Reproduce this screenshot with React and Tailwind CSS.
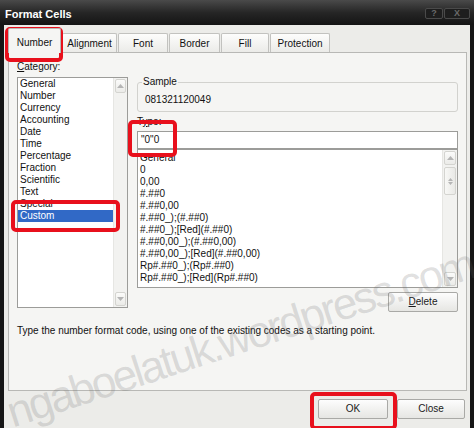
import React from "react";

const CATS = ["General","Number","Currency","Accounting","Date","Time","Percentage","Fraction","Scientific","Text","Special","Custom"];
const CODES = ["General","0","0,00","#.##0","#.##0,00","#.##0_);(#.##0)","#.##0_);[Red](#.##0)","#.##0,00_);(#.##0,00)","#.##0,00_);[Red](#.##0,00)","Rp#.##0_);(Rp#.##0)","Rp#.##0_);[Red](Rp#.##0)"];

function Up() {
  return (
    <svg width="7" height="4" viewBox="0 0 7 4"><path d="M0 4 L3.5 0 L7 4Z" fill="#b5b5b5" /></svg>
  );
}
function Down() {
  return (
    <svg width="7" height="4" viewBox="0 0 7 4"><path d="M0 0 L3.5 4 L7 0Z" fill="#b5b5b5" /></svg>
  );
}
function Grip() {
  return (
    <svg width="5" height="7" viewBox="0 0 5 7"><path d="M0 3 L2.5 0 L5 3Z M0 4 L2.5 7 L5 4Z" fill="#b5b5b5" /></svg>
  );
}

function SBtn({ children }) {
  return (
    <div className="h-[14px] mx-[1px] flex items-center justify-center bg-gradient-to-b from-[#fbfbfa] to-[#ebebe8] border border-[#d4d4d0] rounded-[2px]">
      {children}
    </div>
  );
}

function ScrollBar({ thumb, w }) {
  return (
    <div className={`${w} flex flex-col bg-[#f2f2f0] border-l border-[#e6e6e3] py-[1px]`}>
      <SBtn><Up /></SBtn>
      <div className="flex-1 flex flex-col">
        {thumb && (
          <div className="mt-[2px] h-[28px] mx-[1px] flex items-center justify-center bg-gradient-to-r from-[#f8f8f6] to-[#e9e9e6] border border-[#d4d4d0] rounded-[2px]">
            <Grip />
          </div>
        )}
      </div>
      <SBtn><Down /></SBtn>
    </div>
  );
}

function Btn({ w, children }) {
  return (
    <div className={`${w} h-[20px] flex items-center justify-center bg-gradient-to-b from-[#fdfdfd] to-[#e6e6e3] border border-[#a9a9a6] rounded-[2px] text-[#1a1a1a]`}>
      {children}
    </div>
  );
}

function RedBox({ cls }) {
  return <div className={`pointer-events-none absolute border-[4px] border-[#e8101c] rounded-[5px] ${cls}`} />;
}

export default function App() {
  const tabs = [
    ["Alignment", "w-[55px]"],
    ["Font", "w-[50px]"],
    ["Border", "w-[51px]"],
    ["Fill", "w-[48px]"],
    ["Protection", "w-[60px]"],
  ];
  return (
    <div className="relative w-[474px] h-[428px] overflow-hidden bg-[#161616] flex flex-col font-['Liberation_Sans',Arial,sans-serif] text-[10px] leading-[12px] text-[#111]">
      {/* title bar */}
      <div className="h-[25px] flex justify-between bg-gradient-to-b from-[#4a4a4a] via-[#262626] to-[#141414]">
        <div className="pl-[5px] pt-[8px] text-[11px] leading-[12px] font-bold text-white">Format Cells</div>
        <div className="flex items-start pt-[8px] pr-[4px] gap-[1px]">
          <div className="w-[18px] h-[11px] flex items-center justify-center border border-[#4a4a4a] rounded-[2px] bg-[#1e1e1e] text-[#6a6a6a] text-[9px] leading-[9px] font-bold">?</div>
          <div className="w-[26px] h-[11px] flex items-center justify-center border border-[#4a4a4a] rounded-[2px] bg-[#1e1e1e] text-[#6a6a6a] text-[9px] leading-[9px] font-bold">X</div>
        </div>
      </div>

      {/* body */}
      <div className="flex-1 mx-[4px] bg-[#ecece9] flex flex-col">
        {/* tabs */}
        <div className="h-[27px] flex items-end pl-[4px] gap-[1px]">
          <div className="relative z-10 w-[53px] h-[25px] -mb-[1px] flex items-end justify-center pb-[4px] bg-[#f5f5f3] border-t border-l border-r border-[#b8b8b5] rounded-t-[2px]">
            Number
          </div>
          {tabs.map(([t, w]) => (
            <div key={t} className={`${w} h-[19px] flex items-center justify-center pt-[1px] bg-gradient-to-b from-[#fdfdfc] to-[#ebebe8] border-t border-l border-r border-[#c2c2bf] rounded-t-[2px]`}>
              {t}
            </div>
          ))}
        </div>

        {/* panel */}
        <div className="ml-[4px] mr-[3px] h-[339px] bg-[#f5f5f3] border border-[#b8b8b5] px-[8px] pt-[8px] flex flex-col">
          <div className="flex gap-[9px]">
            {/* left column */}
            <div className="w-[111px] flex flex-col">
              <div className="h-[12px]"><span className="underline">C</span>ategory:</div>
              <div className="mt-[4px] h-[231px] bg-white border border-[#9c9c99] flex">
                <div className="flex-1 flex flex-col">
                  {CATS.map((c) => (
                    <div key={c} className={`h-[12px] pl-[2px] ${c === "Custom" ? "bg-[#3169c6] text-white" : ""}`}>{c}</div>
                  ))}
                </div>
                <ScrollBar w="w-[14px]" />
              </div>
            </div>

            {/* right column */}
            <div className="w-[321px] flex flex-col">
              <fieldset className="mt-[15px] m-0 border border-[#d2d2ce] rounded-[3px] px-[4px] pb-[5px]">
                <legend className="px-[1px] h-[12px] leading-[12px]">Sample</legend>
                <div className="mt-[6px] pl-[3px] h-[12px]">081321120049</div>
              </fieldset>
              <div className="mt-[4px] h-[12px]">T<span className="underline">y</span>pe:</div>
              <div className="mt-[3px] h-[18px] bg-white border border-[#9c9c99] flex items-center pl-[3px]">{'"0"0'}</div>
              <div className="h-[139px] bg-white border border-[#9c9c99] flex">
                <div className="flex-1 flex flex-col pt-[2px]">
                  {CODES.map((c) => (
                    <div key={c} className="h-[12px] pl-[2px] whitespace-nowrap">{c}</div>
                  ))}
                </div>
                <ScrollBar w="w-[15px]" thumb />
              </div>
              <div className="mt-[4px] self-end">
                <Btn w="w-[70px]"><span><span className="underline">D</span>elete</span></Btn>
              </div>
            </div>
          </div>
          <div className="mt-[13px] h-[12px] whitespace-nowrap">
            Type the number format code, using one of the existing codes as a starting point.
          </div>
        </div>

        {/* bottom buttons */}
        <div className="mt-[8px] flex justify-end gap-[9px] pr-[5px]">
          <Btn w="w-[70px]">OK</Btn>
          <Btn w="w-[68px]">Close</Btn>
        </div>
      </div>

      {/* watermark */}
      <div className="pointer-events-none absolute left-[240px] top-[338px] -translate-x-1/2 -translate-y-1/2 -rotate-[18deg] whitespace-nowrap text-[44px] leading-[44px] tracking-[-2.5px] text-[rgba(100,100,100,0.2)]">
        ngaboelatuk.wordpress.com
      </div>

      {/* red highlight boxes */}
      <RedBox cls="left-[5px] top-[27px] w-[58px] h-[35px]" />
      <RedBox cls="left-[11px] top-[200px] w-[109px] h-[32px]" />
      <RedBox cls="left-[128px] top-[120px] w-[49px] h-[37px]" />
      <RedBox cls="left-[310px] top-[392px] w-[87px] h-[38px]" />
    </div>
  );
}
